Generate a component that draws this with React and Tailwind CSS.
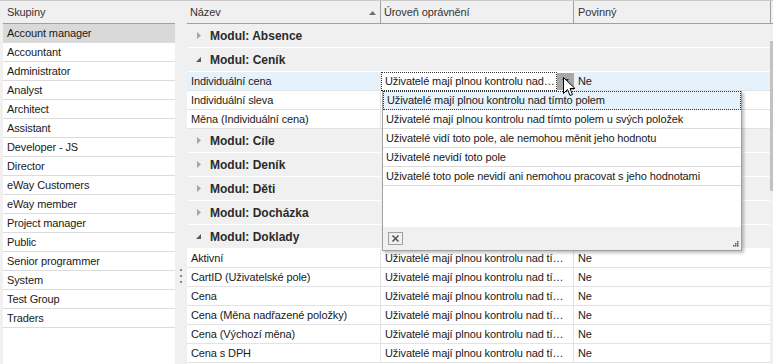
import React from "react";

const groups = [
  "Account manager",
  "Accountant",
  "Administrator",
  "Analyst",
  "Architect",
  "Assistant",
  "Developer - JS",
  "Director",
  "eWay Customers",
  "eWay member",
  "Project manager",
  "Public",
  "Senior programmer",
  "System",
  "Test Group",
  "Traders",
];

const FULL = "Uživatelé mají plnou kontrolu nad tí…";

const rows = [
  { type: "group", name: "Modul: Absence", open: false },
  { type: "group", name: "Modul: Ceník", open: true },
  { type: "item", name: "Individuální cena", selected: true, combo: true },
  { type: "item", name: "Individuální sleva", hidden: true },
  { type: "item", name: "Měna (Individuální cena)", hidden: true },
  { type: "group", name: "Modul: Cíle", open: false },
  { type: "group", name: "Modul: Deník", open: false },
  { type: "group", name: "Modul: Děti", open: false },
  { type: "group", name: "Modul: Docházka", open: false },
  { type: "group", name: "Modul: Doklady", open: true },
  { type: "item", name: "Aktivní" },
  { type: "item", name: "CartID (Uživatelské pole)" },
  { type: "item", name: "Cena" },
  { type: "item", name: "Cena (Měna nadřazené položky)" },
  { type: "item", name: "Cena (Výchozí měna)" },
  { type: "item", name: "Cena s DPH" },
];

const options = [
  "Uživatelé mají plnou kontrolu nad tímto polem",
  "Uživatelé mají plnou kontrolu nad tímto polem u svých položek",
  "Uživatelé vidí toto pole, ale nemohou měnit jeho hodnotu",
  "Uživatelé nevidí toto pole",
  "Uživatelé toto pole nevidí ani nemohou pracovat s jeho hodnotami",
];

function Arrow({ open }) {
  if (open) {
    return (
      <svg width="7" height="7" viewBox="0 0 7 7" className="shrink-0">
        <path d="M6 1 L6 6 L1 6 Z" fill="#595959" />
      </svg>
    );
  }
  return (
    <svg width="7" height="9" viewBox="0 0 7 9" className="shrink-0">
      <path d="M2 1 L6 4.5 L2 8 Z" fill="#a6a6a6" />
    </svg>
  );
}

export default function App() {
  return (
    <div
      className="relative w-[773px] h-[364px] overflow-hidden bg-[#f0f0f0] border-t border-[#c9c9c9] flex text-[11px] tracking-[-0.12px] text-[#1a1a1a]"
      style={{ fontFamily: '"Liberation Sans", Arial, sans-serif' }}
    >
      {/* Left panel */}
      <div className="ml-[3px] w-[172px] flex flex-col bg-white">
        <div className="h-[23px] bg-[#f0f0f0] border-b border-[#a0a0a0] flex items-center pl-[4px] text-[#333]">
          Skupiny
        </div>
        {groups.map((g, i) => (
          <div
            key={g}
            className={`h-[19px] border-b border-[#dcdcdc] flex items-center pl-[4px] whitespace-nowrap ${
              i === 0 ? "bg-[#d9d9d9]" : ""
            }`}
          >
            {g}
          </div>
        ))}
      </div>

      {/* Splitter */}
      <div className="w-[12px] flex flex-col items-center pt-[268px] gap-[4px]">
        <div className="w-[2px] h-[2px] bg-[#8a8a8a]" />
        <div className="w-[2px] h-[2px] bg-[#8a8a8a]" />
        <div className="w-[2px] h-[2px] bg-[#8a8a8a]" />
      </div>

      {/* Right panel */}
      <div className="flex-1 flex flex-col">
        <div className="h-[23px] border-b border-[#a0a0a0] grid grid-cols-[194px_193px_197px_2px] text-[#333]">
          <div className="flex items-center pl-[3px] pr-[4px] border-r border-[#a0a0a0]">
            <span className="flex-1">Název</span>
            <svg width="7" height="5" viewBox="0 0 7 5">
              <path d="M0 5 L3.5 1 L7 5 Z" fill="#707070" />
            </svg>
          </div>
          <div className="flex items-center pl-[3px] border-r border-[#a0a0a0]">
            Úroveň oprávnění
          </div>
          <div className="flex items-center pl-[4px] border-r border-[#a0a0a0]">
            Povinný
          </div>
          <div />
        </div>
        <div className="flex-1 flex">
          <div className="flex-1 flex flex-col bg-white">
            {rows.map((r) =>
              r.type === "group" ? (
                <div
                  key={r.name}
                  className="h-[24px] shrink-0 bg-[#f0f0f0] border-b border-white flex items-center pl-[8px] gap-[8px]"
                >
                  <Arrow open={r.open} />
                  <span className="font-bold text-[12px] tracking-normal text-[#2b2b2b]">{r.name}</span>
                </div>
              ) : (
                <div
                  key={r.name}
                  className={`h-[19px] shrink-0 border-b border-[#e3e3e3] grid grid-cols-[194px_193px_1fr] ${
                    r.selected ? "bg-[#e5f1fb]" : ""
                  }`}
                >
                  <div className="flex items-center pl-[4px] border-r border-[#e3e3e3] whitespace-nowrap overflow-hidden">
                    {r.name}
                  </div>
                  {r.combo ? (
                    <div className="flex bg-white">
                      <div className="flex-1 flex items-center pl-[3px] border border-dotted border-[#333] whitespace-nowrap">
                        Uživatelé mají plnou kontrolu nad…
                      </div>
                      <div className="w-[17px] my-[1px] bg-[#a8a8a8] flex items-center justify-center">
                        <svg width="7" height="4" viewBox="0 0 7 4">
                          <path d="M0 0 L7 0 L3.5 4 Z" fill="#333" />
                        </svg>
                      </div>
                    </div>
                  ) : (
                    <div className="flex items-center pl-[4px] border-r border-[#e3e3e3] whitespace-nowrap overflow-hidden">
                      {r.hidden ? "" : FULL}
                    </div>
                  )}
                  <div className="flex items-center pl-[4px]">{r.hidden ? "" : "Ne"}</div>
                </div>
              )
            )}
          </div>
          <div className="w-[3px] flex flex-col bg-[#f0f0f0]">
            <div className="h-[17px]" />
            <div className="h-[150px] bg-[#c2c2c2]" />
          </div>
        </div>
      </div>

      {/* Dropdown popup */}
      <div className="absolute left-[382px] top-[90px] w-[360px] h-[160px] bg-white border border-t-0 border-[#a0a0a0] shadow-[2px_2px_3px_rgba(0,0,0,0.25)] flex flex-col">
        {options.map((o, i) => (
          <div
            key={o}
            className={`h-[19px] shrink-0 flex items-center pl-[3px] border-b whitespace-nowrap ${
              i === 0
                ? "bg-[#e5f1fb] border border-dotted border-[#333]"
                : "border-[#dcdcdc]"
            }`}
          >
            {o}
          </div>
        ))}
        <div className="flex-1" />
        <div className="h-[23px] bg-[#f0f0f0] flex items-center pl-[5px] relative">
          <div className="w-[15px] h-[13px] border border-[#a0a0a0] bg-[#f0f0f0] flex items-center justify-center">
            <svg width="9" height="9" viewBox="0 0 9 9">
              <path d="M1.5 1.5 L7.5 7.5 M7.5 1.5 L1.5 7.5" stroke="#555" strokeWidth="1.6" />
            </svg>
          </div>
          <svg width="7" height="7" viewBox="0 0 7 7" className="absolute right-[2px] bottom-[2px]">
            <rect x="5" y="0" width="1.5" height="1.5" fill="#555" />
            <rect x="3" y="2" width="1.5" height="1.5" fill="#555" />
            <rect x="5" y="2" width="1.5" height="1.5" fill="#555" />
            <rect x="1" y="4" width="1.5" height="1.5" fill="#555" />
            <rect x="3" y="4" width="1.5" height="1.5" fill="#555" />
            <rect x="5" y="4" width="1.5" height="1.5" fill="#555" />
          </svg>
        </div>
      </div>

      {/* Mouse cursor */}
      <svg
        width="13"
        height="21"
        viewBox="0 0 13 21"
        className="absolute left-[563px] top-[76px]"
      >
        <path
          d="M0.5 0.5 L0.5 16.5 L4.5 12.5 L7 18.5 L9.5 17.5 L7 11.5 L12 11.5 Z"
          fill="white"
          stroke="black"
          strokeWidth="1"
          strokeLinejoin="miter"
        />
      </svg>
    </div>
  );
}
